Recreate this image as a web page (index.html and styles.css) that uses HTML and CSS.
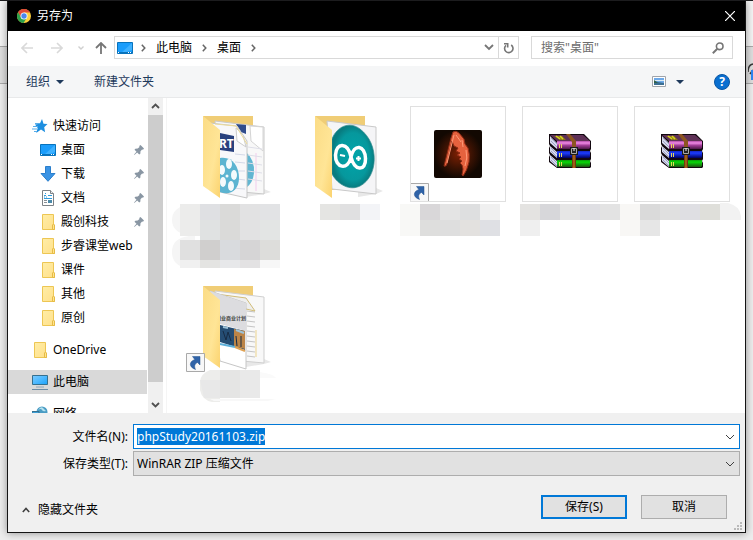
FILE: index.html
```html
<!DOCTYPE html>
<html lang="zh-CN">
<head>
<meta charset="utf-8">
<title>另存为</title>
<meta name="viewport" content="width=device-width, initial-scale=1">
<link rel="stylesheet" href="styles.css">
</head>
<body>
<svg width="0" height="0" class="defs" aria-hidden="true">
  <defs>
    <linearGradient id="flap" x1="0" y1="0" x2="1" y2="1"><stop offset="0" stop-color="#fbdc86"/><stop offset="0.6" stop-color="#ffe596"/><stop offset="1" stop-color="#fbd36f"/></linearGradient>
    <linearGradient id="leaf" x1="0" y1="0" x2="1" y2="1"><stop offset="0" stop-color="#ffeda6"/><stop offset="1" stop-color="#ffe08a"/></linearGradient>
    <linearGradient id="screen" x1="0" y1="0" x2="1" y2="1"><stop offset="0" stop-color="#7ccbff"/><stop offset="0.5" stop-color="#4db9ff"/><stop offset="1" stop-color="#1ba1f8"/></linearGradient>
    <radialGradient id="teal"><stop offset="0" stop-color="#00a5aa"/><stop offset="0.75" stop-color="#06989d"/><stop offset="1" stop-color="#087c80"/></radialGradient>
    <radialGradient id="ember"><stop offset="0" stop-color="#7c2003"/><stop offset="0.6" stop-color="#3a1203"/><stop offset="1" stop-color="#120802"/></radialGradient>
    <linearGradient id="plum" x1="0" y1="0" x2="0" y2="1"><stop offset="0" stop-color="#b04aa6"/><stop offset="0.25" stop-color="#f08ae6"/><stop offset="0.55" stop-color="#a03c96"/><stop offset="1" stop-color="#4d1848"/></linearGradient>
    <linearGradient id="navy" x1="0" y1="0" x2="0" y2="1"><stop offset="0" stop-color="#1526c0"/><stop offset="0.3" stop-color="#1c3cff"/><stop offset="1" stop-color="#000060"/></linearGradient>
    <linearGradient id="green" x1="0" y1="0" x2="0" y2="1"><stop offset="0" stop-color="#0a9a0a"/><stop offset="0.3" stop-color="#08d808"/><stop offset="1" stop-color="#1d5412"/></linearGradient>
    <linearGradient id="strap" x1="0" y1="0" x2="1" y2="0"><stop offset="0" stop-color="#5c2e08"/><stop offset="0.5" stop-color="#b86d1c"/><stop offset="1" stop-color="#53290a"/></linearGradient>
    <symbol id="folder" viewBox="0 0 16 16"><path d="M2.5.5h11v11l1 1v3h-12z" fill="url(#leaf)" stroke="#edc653"/><path d="M12.5 15.500v-4.500l1-1 1 1v4.500z" fill="#ffe48f" stroke="#e6bb45"/></symbol>
    <symbol id="desktop" viewBox="0 0 16 16"><path d="M.5 2.500h15v11H.5z" fill="#1b9dfb" stroke="#0873bc"/><path d="M15 3v7L8 13H4z" fill="#3eb1ff"/><path d="M1 12.500h14" stroke="#0873bc"/><path d="M1 12.500h1m9 0h1m1 0h1" stroke="#fff"/></symbol>
    <symbol id="pin" viewBox="0 0 10 10"><path d="M6.500 0 10 3.500l-1 1.300-.9-.2L6.500 6.300l-.2 2.400-1.100.8L3.200 7.500.6 9.700 0 10l.3-.7L2.500 6.800.5 4.800l.8-1.100 2.400-.2L5.500 2 5.200 1z" fill="#8996a3"/></symbol>
    <symbol id="down" viewBox="0 0 10 6"><path d="m1 1 4 4 4-4" fill="none" stroke="currentColor"/></symbol>
    <symbol id="link" viewBox="0 0 19 19"><path d="M.5.5h18v18H.5z" fill="#f8f8f8" stroke="#a9a9a9"/><path d="M6.500 3.500H14V12l-2.500-2.500C8.500 11 8 13 9.500 16.500 2.500 14 3 8.500 8.800 6.500z" fill="#2f63a8" stroke="#22538f" stroke-width=".5"/></symbol>
    <symbol id="books" viewBox="0 0 42 34">
      <path d="M0 0h35l7 7v8l-1 2 1 2v6l-1 2 1 2v4l-1 1H8L0 28v-5l1-2-1-2v-5l1-2-1-2z" fill="#12080f"/>
      <path d="M1 1h33l7 6H8z" fill="#5f3156"/><path d="M5 2h8l4 4h-6z" fill="#8f7919"/><path d="m7 2 4 3m0-3 3 3" stroke="#d8d323" stroke-width="1.500"/>
      <path d="m1 2 7 7v6L1 9zm0 10 7 6v6l-7-6zm0 9 7 6v6l-7-6z" fill="#d8d9ed"/><path d="m2 4 6 6M2 7l6 6M2 14l6 6m-6-3 6 6M2 23l6 6m-6-3 6 6" stroke="#858bb4" stroke-width=".7"/>
      <path d="M8 7h33v7l-1 1H8z" fill="url(#plum)"/><path d="M8 17h33v6l-1 1H8z" fill="url(#navy)"/><path d="M8 26h33v6l-1 1H8z" fill="url(#green)"/>
      <path d="M10.500 10v4m2-4v4m-2 5v4m2-4v4m-2 5v4m2-4v4" stroke="#e8d85a"/>
      <path d="M17 0h4l6 7v7h-4V8z" fill="#8c5520"/><path d="M23 21h4v13h-4z" fill="url(#strap)"/>
      <path d="M21 13h8v8h-8z" fill="#191919"/><path d="M22.500 14.500h5v5h-5z" fill="#222" stroke="#a9a9a9"/><path d="M25 14v3" stroke="#f4f4f4"/>
    </symbol>
  </defs>
</svg>

<main class="dialog">
  <header class="titlebar">
    <svg class="logo" width="14" height="14" viewBox="0 0 16 16" aria-hidden="true"><circle cx="8" cy="8" r="8" fill="#fbce3c"/><path d="M8 8V4h7A8 8 0 0 0 1.200 3.800L4.500 10z" fill="#e04a38"/><path d="M1.200 3.800A8 8 0 0 0 7.500 16L11.300 10 8 8 4.700 9.800z" fill="#2ca04c"/><circle cx="8" cy="8" r="4" fill="#fff"/><circle cx="8" cy="8" r="3.100" fill="#4a86ee"/></svg>
    <h1>另存为</h1>
    <button class="plain close" aria-label="关闭"><svg width="10" height="10" viewBox="0 0 10 10"><path d="m0 0 10 10M10 0 0 10" stroke="#fff" stroke-width="1.200"/></svg></button>
  </header>

  <nav class="address">
    <button class="plain nav back" aria-label="后退"><svg width="12" height="12" viewBox="0 0 12 12"><path d="M12 6H1m5-5L1 6l5 5" fill="none" stroke="#d9d9d9" stroke-width="1.600"/></svg></button>
    <button class="plain nav fwd" aria-label="前进"><svg width="12" height="12" viewBox="0 0 12 12"><path d="M0 6h11M6 1l5 5-5 5" fill="none" stroke="#d9d9d9" stroke-width="1.600"/></svg></button>
    <button class="plain nav recent" aria-label="最近位置"><svg width="6" height="4" viewBox="0 0 6 4"><path d="m.5.5 2.500 2.500L5.500.5" fill="none" stroke="#cfcfcf" stroke-width="1.400"/></svg></button>
    <button class="plain nav up" aria-label="上移"><svg width="12" height="12" viewBox="0 0 12 12"><path d="M6 12V1M1 6l5-5 5 5" fill="none" stroke="#767676" stroke-width="1.800"/></svg></button>
    <div class="path">
      <svg class="place" width="16" height="16"><use href="#desktop"/></svg>
      <svg class="sep" width="5" height="8" viewBox="0 0 5 8"><path d="m.8.8 3 3.200-3 3.200" fill="none" stroke="#666" stroke-width="1.500"/></svg>
      <a href="#pc">此电脑</a>
      <svg class="sep" width="5" height="8" viewBox="0 0 5 8"><path d="m.8.8 3 3.200-3 3.200" fill="none" stroke="#666" stroke-width="1.500"/></svg>
      <a href="#desk">桌面</a>
      <svg class="sep" width="5" height="8" viewBox="0 0 5 8"><path d="m.8.8 3 3.200-3 3.200" fill="none" stroke="#666" stroke-width="1.500"/></svg>
      <button class="plain history" aria-label="历史"><svg width="10" height="7" viewBox="0 0 10 7"><path d="m1 1 4 4 4-4" fill="none" stroke="#767676" stroke-width="1.800"/></svg></button>
      <button class="plain refresh" aria-label="刷新"><svg width="12" height="12" viewBox="0 0 12 12"><path d="M8.200 3A4.200 4.200 0 1 1 3 3.300" fill="none" stroke="#767676" stroke-width="1.600"/><path d="M1 1.800h3.700v3.700" fill="none" stroke="#767676" stroke-width="1.600"/></svg></button>
    </div>
    <div class="search">
      <input type="text" aria-label="搜索" placeholder='搜索"桌面"'>
      <svg width="12" height="12" viewBox="0 0 12 12"><circle cx="7.700" cy="4.300" r="3.300" fill="none" stroke="#767676" stroke-width="1.600"/><path d="M5.300 6.800.8 11.200" stroke="#767676" stroke-width="2"/></svg>
    </div>
  </nav>

  <div class="toolbar">
    <button class="plain">组织<svg width="8" height="4" viewBox="0 0 8 4"><path d="M0 0h8L4 4z" fill="#1e395b"/></svg></button>
    <button class="plain">新建文件夹</button>
    <button class="plain view" aria-label="更改视图"><svg width="14" height="11" viewBox="0 0 14 11"><path d="M.5.5h13v10H.5z" fill="#fff" stroke="#a0a4aa"/><path d="M2 2h10v7H2z" fill="#6ea9e8"/><path d="M2 4h10v1H2z" fill="#dcecf5"/><path d="m2 5 4 1 6 1v2H2z" fill="#3c6f92"/><path d="m2 4 4 3H2z" fill="#326148"/></svg></button>
    <button class="plain more" aria-label="更多选项"><svg width="8" height="4" viewBox="0 0 8 4"><path d="M0 0h8L4 4z" fill="#1e395b"/></svg></button>
    <button class="help" aria-label="帮助">?</button>
  </div>

  <div class="content">
    <aside class="tree">
      <ul>
        <li class="root"><svg width="16" height="16" viewBox="0 0 16 16"><path d="m10 1 1.500 4.700 4 .3-3.300 3.200.9 5L9 11.500 4.200 15l1.500-5L3 6.500l4.800-.7z" fill="#1d8fe0"/><path d="M3 5.500h5M1 8.500h5M0 11h5M2 13.500h3" stroke="#56adea"/></svg>快速访问</li>
        <li><svg width="16" height="16"><use href="#desktop"/></svg>桌面<svg class="pin" width="10" height="10"><use href="#pin"/></svg></li>
        <li><svg width="16" height="16" viewBox="0 0 16 16"><path d="M5.500.5h5v7h4.500l-7 7.800-7-7.800h4.500z" fill="#3a93e4" stroke="#2b7fcc"/></svg>下载<svg class="pin" width="10" height="10"><use href="#pin"/></svg></li>
        <li><svg width="16" height="16" viewBox="0 0 16 16"><path d="M2.500.5h8l3 3v12h-11z" fill="#fff" stroke="#7d8287"/><path d="M10.500.5v3h3" fill="#eee" stroke="#7d8287"/><path d="M8 5.500h4M4 8.500h8M4 5.500h2M5 3.500h1M4 7h1m1 0h1" stroke="#2f9bdc"/><path d="M4 10.500h3M4 12.500h3" stroke="#8a9096"/><path d="M8 10h4v3H8z" fill="#4b8aaa"/></svg>文档<svg class="pin" width="10" height="10"><use href="#pin"/></svg></li>
        <li><svg width="16" height="16"><use href="#folder"/></svg>殿创科技<svg class="pin" width="10" height="10"><use href="#pin"/></svg></li>
        <li><svg width="16" height="16"><use href="#folder"/></svg>步睿课堂web</li>
        <li><svg width="16" height="16"><use href="#folder"/></svg>课件</li>
        <li><svg width="16" height="16"><use href="#folder"/></svg>其他</li>
        <li><svg width="16" height="16"><use href="#folder"/></svg>原创</li>
      </ul>
      <ul><li class="root"><svg width="16" height="16"><use href="#folder"/></svg>OneDrive</li></ul>
      <ul><li class="root selected"><svg width="16" height="16" viewBox="0 0 16 16"><path d="M.5 1.500h15v9H.5z" fill="url(#screen)" stroke="#35708f"/><path d="M4 13h8" stroke="#8fa7b8"/><path d="M0 15.500h16" stroke="#6f8da5"/></svg>此电脑</li></ul>
      <ul><li class="root"><svg width="16" height="16" viewBox="0 0 16 16"><circle cx="10" cy="6" r="5.500" fill="#4a9cc4"/><path d="M6 4q3-4 5-2t3 3q-3 1-4-1t-4 0" fill="#b5e1ee"/><path d="M0 5.500h7V11H0z" fill="#3da0d8" stroke="#35708f"/></svg>网络</li></ul>
    </aside>
    <div class="scroll" aria-hidden="true">
      <svg width="15" height="17" viewBox="0 0 15 17"><path d="m4 10 3.500-3.500L11 10" fill="none" stroke="#505050" stroke-width="1.800"/></svg>
      <span class="thumb"></span>
      <svg width="15" height="17" viewBox="0 0 15 17"><path d="m4 7 3.500 3.500L11 7" fill="none" stroke="#505050" stroke-width="1.800"/></svg>
    </div>

    <div class="files">
      <div class="file">
        <svg class="art" width="96" height="96" viewBox="0 0 96 96">
          <path d="m60 91 18-3 7-2-7-3-18 2z" fill="#e8e8e8"/>
          <path d="M17 10h50v74H34z" fill="#f0cd76"/>
          <path d="m29 15 49 6v67l-44-4z" fill="#f8f8f8" stroke="#c9c9c9"/>
          <path d="m50 18 10 1v9l-5-2z" fill="#304c8c"/><path d="m64 20 1 15 12 10V21z" fill="#fff" stroke="#d4d4d4"/>
          <path d="M60 46q9 8 8 21-1 10-8 15" fill="#62b6d2"/><path d="M70 47v38" stroke="#f2ccec"/>
          <path d="m62 41 14 2m-14 6 14 2m-14 6 14 2m-14 6 14 2m-14 6 14 2" stroke="#dedee8"/>
          <path d="m24 17 27 3 10 15v57l-27-6z" fill="#f8f8fa" stroke="#c6c6c6"/>
          <path d="m34 27 14 3v16l-14-2z" fill="#29417e"/>
          <text x="33" y="42" class="reel-text">RT</text>
          <path d="m50 22 1 13 9 6-3-12z" fill="#fff" stroke="#ccc"/><path d="m29 18 21 2 11 18" fill="none" stroke="#eedc98"/>
          <path d="m49 48 10 1m-10 7 10 1m-8 8h8m-8 8 8 1m-14 8 14 1" stroke="#d4d9e8"/>
          <path d="M34 52c12-2 19 8 19 20S44 90 34 86z" fill="#5cb4d1"/><g fill="#f4fafc"><ellipse cx="43" cy="58" rx="3" ry="5"/><ellipse cx="36" cy="64" rx="3" ry="5"/><ellipse cx="48" cy="69" rx="3" ry="5"/><ellipse cx="37" cy="76" rx="3" ry="5"/><ellipse cx="45" cy="80" rx="3" ry="5"/><circle cx="41" cy="70" r="1.500"/></g>
          <path d="m17 10 17 14v68L17 80z" fill="url(#flap)"/>
        </svg>
        <svg class="mosaic" width="96" height="64" viewBox="0 0 96 64">
          <path d="M9 0H2q-16 4-16 16t17 16q-17 2-17 16T2 64h7z" fill="#f5f5f5"/>
          <path d="M-6 0h20v32H-6z" fill="#ececeb"/><path d="M14 0h20v32H14z" fill="#dfe0e3"/><path d="M34 0h20v36H34z" fill="#dadad9"/><path d="M54 0h20v36H54z" fill="#e2e2e3"/><path d="M74 0h20v36H74z" fill="#e2e3e5"/>
          <path d="M14 16h20v20H14z" fill="#e0e2e2"/><path d="M74 16h20v20H74z" fill="#e3e5e4"/>
          <path d="M-6 36h20v20H-6z" fill="#e0e0e0"/><path d="M14 36h20v20H14z" fill="#d0cfce"/><path d="M34 36h20v20H34z" fill="#d9dbde"/><path d="M54 36h20v20H54z" fill="#d6d5d6"/><path d="M74 36h20v20H74z" fill="#dddddb"/>
          <path d="M-6 56h20v8H-6z" fill="#f0f0f0"/><path d="M14 56h20v8H14z" fill="#e4e4e2"/><path d="M34 56h20v8H34z" fill="#e7e8ea"/><path d="M54 56h20v8H54z" fill="#e3e2e3"/><path d="M74 56h20v8H74z" fill="#f7f7f7"/>
        </svg>
      </div>
      <div class="file">
        <svg class="art" width="96" height="96" viewBox="0 0 96 96">
          <path d="m60 91 18-3 7-3-7-3-18 2z" fill="#e8e8e8"/>
          <path d="M17 10h50v74H34z" fill="#f0cd76"/>
          <path d="m29 15 49 6v67l-44-5z" fill="#f5f5f7" stroke="#c9c9c9"/>
          <path d="M34 33c5-13 18-18 28-10 20 15 18 48 0 57-10 5-22-1-28-12z" fill="url(#teal)" stroke="#2e8a8c" stroke-width=".7"/>
          <path d="M53 51C50 36 38 36 37.500 49s12.500 16 15.500 2 14-12 14.500 1.500S56 65 53 51z" fill="none" stroke="#fff" stroke-width="3.500"/>
          <path d="m42 49 5 1M58 52.500h5M60.500 50v5" stroke="#fff" stroke-width="2"/>
          <path d="m17 10 17 14v68L17 80z" fill="url(#flap)"/>
        </svg>
        <svg class="mosaic" width="96" height="16" viewBox="0 0 96 16"><path d="M22 0h20v16H22z" fill="#e5e5e3"/><path d="M42 0h20v16H42z" fill="#e0e0e1"/><path d="M62 0h20v16H62z" fill="#f3f4f7"/></svg>
      </div>
      <div class="file framed">
        <svg class="art" width="96" height="96" viewBox="0 0 96 96">
          <rect x="24" y="24" width="48" height="48" rx="2" fill="url(#ember)"/>
          <path d="m34 60 3-12 4-16 2-6q3-2 6 1l5 6 1 5 3 4q2 6 1 14-2 9-6 14l-1-1 1-6-1-4-2-2 2-2-3-2 2-2-4-2 3-2-4-2 2-3-4-2-2-5-5 23q-1 3-3 2z" fill="#e5623e" stroke="#8c2a14"/>
          <path d="m37 57 7-28m2 0 5 7m1-2 1 7m3 3q2 8-1 16" fill="none" stroke="#ff9a78"/>
          <svg y="77" width="19" height="19"><use href="#link"/></svg>
        </svg>
        <svg class="mosaic" width="96" height="32" viewBox="0 0 96 32"><path d="M-10 0h20v32h-20z" fill="#f8f8f6"/><path d="M10 0h20v16H10z" fill="#d9d7d9"/><path d="M30 0h20v16H30z" fill="#e4e4e4"/><path d="M50 0h20v16H50z" fill="#dedfe0"/><path d="M70 0h20v16H70z" fill="#f0f0f0"/><path d="M10 16h20v16H10z" fill="#dededd"/><path d="M30 16h20v16H30z" fill="#dedede"/><path d="M50 16h20v16H50z" fill="#e3e1df"/><path d="M70 16h20v16H70z" fill="#dfe0e4"/></svg>
      </div>
      <div class="file framed">
        <svg class="art" width="96" height="96" viewBox="0 0 96 96"><use href="#books" x="27" y="28" width="42" height="34"/></svg>
        <svg class="mosaic" width="96" height="32" viewBox="0 0 96 32"><path d="M-2 0h20v16H-2z" fill="#e4e3e1"/><path d="M18 0h20v16H18z" fill="#d7d7da"/><path d="M38 0h20v16H38z" fill="#e6e6e6"/><path d="M58 0h20v16H58z" fill="#dfdfe3"/><path d="M78 0h20v16H78z" fill="#e3e3e3"/><path d="M-2 16h20v16H-2z" fill="#efefef"/></svg>
      </div>
      <div class="file framed">
        <svg class="art" width="96" height="96" viewBox="0 0 96 96"><use href="#books" x="27" y="28" width="42" height="34"/></svg>
        <svg class="mosaic" width="96" height="32" viewBox="0 0 96 32"><path d="M-14 0H6v32h-20z" fill="#f8f7f5"/><path d="M6 0h20v16H6z" fill="#dadada"/><path d="M26 0h20v16H26z" fill="#e0e0e0"/><path d="M46 0h20v16H46z" fill="#dfdfe3"/><path d="M66 0h20v16H66z" fill="#dfdfda"/><path d="M86-1h8q12 3 13 13v4H86z" fill="#f2f2f2"/><path d="M6 16h20v16H6z" fill="#e6e6e6"/></svg>
      </div>
      <div class="file">
        <svg class="art" width="96" height="96" viewBox="0 0 96 96">
          <path d="m60 91 18-3 7-2-7-3-18 2z" fill="#e8e8e8"/>
          <path d="M17 10h50v74H34z" fill="#f0cd76"/>
          <path d="m29 15 49 6v66l-44-4z" fill="#f8f8f8" stroke="#cfcfcf"/>
          <path d="m61 35 8 1m-8 4 8 1m-8 4 8 1m-8 4 8 1m-8 4 8 1m-8 4 8 1m-8 4 8 1m-8 4 8 1m-8 4 8 1m-8 4 8 1" stroke="#c4c4c4"/><path d="M70 54v27" stroke="#ecd38d"/>
          <path d="m30 18 30 4 9 13-9-2" fill="#eee" stroke="#d2bd78"/>
          <path d="m24 15 36 12v66l-26-8z" fill="#fff" stroke="#c6c6c6"/>
          <path d="m24 15 36 12v28l-26-7z" fill="#dcdcdf"/>
          <text x="30" y="44" class="cover-text">创业商业计划</text>
          <path d="m34 49 25 6v19l-25-8z" fill="#254d73"/><path d="m48 53 11 2v18l-11-3z" fill="#bb8447"/>
          <path d="m37 55 3 9 2-8 3 9m5-5 1 10m4-10v11" stroke="#172c45" fill="none"/><path d="m37 51 5 1m8 2 8 3" stroke="#9cc2d8" stroke-width="2"/>
          <path d="m34 68 15 3" stroke="#5cafda" stroke-width="2"/><path d="m49 71 10 4" stroke="#e0a253" stroke-width="2"/>
          <path d="m17 10 17 14v68L17 80z" fill="url(#flap)"/>
          <svg y="77" width="19" height="19"><use href="#link"/></svg>
        </svg>
        <svg class="mosaic" width="96" height="32" viewBox="0 0 96 32"><path d="M74-2q14 2 16 6H74z" fill="#fafafa"/><path d="M24-4q-10 4-10 12v8q2 10 12 12h8V-4z" fill="#ededeb"/><path d="M34-4h20v28H34z" fill="#e5e5e4"/><path d="M54-4h20v28H54z" fill="#e9e9e9"/><path d="M14 6h20v18H18z" fill="#e8e8e8"/><path d="M24 25h66l-8 2H28z" fill="#f8f8f8"/></svg>
      </div>
    </div>
  </div>

  <form class="footer">
    <label for="name">文件名(N):</label>
    <div class="combo">
      <input id="name" type="text" value="phpStudy20161103.zip">
      <svg width="10" height="6"><use href="#down"/></svg>
    </div>
    <label for="type">保存类型(T):</label>
    <div class="combo type">
      <select id="type"><option>WinRAR ZIP 压缩文件</option></select>
      <svg width="10" height="6"><use href="#down"/></svg>
    </div>
    <div class="actions">
      <button type="button" class="plain hide"><svg width="8" height="6" viewBox="0 0 8 6"><path d="m.8 5 3.200-3.500L7.200 5" fill="none" stroke="#404040" stroke-width="1.600"/></svg>隐藏文件夹</button>
      <button type="button" class="btn primary">保存(S)</button>
      <button type="button" class="btn">取消</button>
    </div>
    <svg class="grip" width="8" height="8" viewBox="0 0 8 8" aria-hidden="true"><path d="M6 0h2v2H6zM3 3h2v2H3zm3 0h2v2H6zM0 6h2v2H0zm3 0h2v2H3zm3 0h2v2H6z" fill="#b9b9b9"/></svg>
  </form>
</main>
<svg class="behind" width="5" height="20" viewBox="0 0 5 20" aria-hidden="true"><path d="M0 9q0-7 5-8M2 11l3-4" fill="none" stroke="#333" stroke-width="1.500"/><path d="M3 7h2v10H3z" fill="#2d83ee"/></svg>
</body>
</html>
```

FILE: styles.css
```css
* { box-sizing: border-box; }

body {
  margin: 0;
  height: 100vh;
  overflow: hidden;
  padding: 0 7px;
  padding-bottom: 7px;
  border-top: 1px solid #1c1c1e;
  background: linear-gradient(#f4f4f4 0 46px, #a9a9a9 46px 47px, #dedede 47px 83px, #a9a9a9 83px 84px, #ededed 84px);
  font-family: "Noto Sans", "Noto Sans CJK SC", sans-serif;
  font-size: 12px;
  line-height: 16px;
  color: #000;
}

.defs { position: absolute; }
svg { display: block; flex: none; }
ul { margin: 0; padding: 0; list-style: none; }
button, input, select { font: inherit; color: inherit; }

.plain {
  display: flex;
  align-items: center;
  padding: 0;
  border: 0;
  background: none;
}

.dialog {
  display: flex;
  flex-direction: column;
  height: 100%;
  border: 1px solid #141414;
  border-top: 0;
  background: #fff;
  box-shadow: 0 0 8px rgba(0, 0, 0, 0.4);
}

.titlebar {
  display: flex;
  align-items: center;
  gap: 6px;
  height: 30px;
  padding: 0 10px 0 9px;
  background: #000;
  color: #fff;
}
.titlebar h1 { margin: 0; flex: 1; font-size: 12px; font-weight: 400; }

.address {
  display: flex;
  align-items: center;
  height: 35px;
  padding: 0 12px 2px 13px;
}
.back { margin-right: 18px; }
.fwd { margin-right: 15px; }
.recent { margin-right: 11px; }
.up { margin-right: 7px; }
.path, .search {
  display: flex;
  align-items: center;
  height: 23px;
  border: 1px solid #d9d9d9;
  background: #fff;
}
.path { flex: 1; padding-left: 2px; margin-right: 12px; }
.path a { color: inherit; text-decoration: none; margin: 0 10px; }
.place { margin-right: 8px; }
.history { margin-left: auto; padding: 0 4px; height: 100%; }
.refresh { width: 20px; height: 100%; justify-content: center; border-left: 1px solid #d9d9d9; }
.search { width: 202px; padding: 0 8px 0 9px; }
.search input { flex: 1; min-width: 0; border: 0; padding: 0; background: none; outline: 0; }
.search input::placeholder { color: #6d6d6d; opacity: 1; }

.toolbar {
  display: flex;
  align-items: center;
  height: 32px;
  padding: 0 15px 0 18px;
  border-bottom: 1px solid #e8e9ea;
  background: #f5f6f7;
  color: #1e395b;
}
.toolbar .plain { gap: 6px; margin-right: 30px; }
.toolbar .view { margin: 0 10px 0 auto; }
.help {
  width: 16px;
  height: 16px;
  padding: 0;
  border: 1px solid #0a57a4;
  border-radius: 50%;
  background: #0a6fd0;
  color: #fff;
  font-weight: 700;
  line-height: 14px;
}

.content {
  display: flex;
  flex: 1;
  min-height: 0;
}
.tree { width: 140px; padding-top: 16px; overflow: hidden; }
.tree ul { margin-bottom: 8px; }
.tree li {
  display: flex;
  align-items: center;
  gap: 5px;
  height: 24px;
  padding: 0 3px 0 32px;
  margin-right: 1px;
  white-space: nowrap;
}
.tree .root { padding-left: 24px; }
.tree .selected { background: #d9d9d9; }
.pin { margin-left: auto; }

.scroll {
  display: flex;
  flex-direction: column;
  width: 15px;
  background: #f0f0f0;
}
.thumb { height: 267px; background: #cdcdcd; }
.scroll svg:last-child { margin-top: auto; }

.files {
  display: grid;
  grid-template-columns: repeat(auto-fill, 96px);
  grid-auto-rows: 170px;
  gap: 0 16px;
  align-content: start;
  flex: 1;
  margin-left: 3px;
  padding: 8px 0 0 19px;
  border-left: 1px solid #f5f5f5;
  overflow: hidden;
}
.file svg { overflow: visible; }
.framed .art { outline: 1px solid #e0e0e0; outline-offset: -1px; }
.mosaic { margin-top: 2px; }
.reel-text { font-size: 12px; font-weight: 700; fill: #fff; }
.cover-text { font-size: 5px; font-weight: 700; fill: #444; }

.footer {
  position: relative;
  display: grid;
  grid-template-columns: 120px 1fr;
  gap: 2px 5px;
  align-items: center;
  padding: 11px 5px 13px 0;
  background: #f0f0f0;
}
.footer label { text-align: right; }
.combo {
  position: relative;
  display: flex;
  align-items: center;
  height: 25px;
  padding: 0 4px 0 3px;
  border: 1px solid #0078d7;
  background: #fff;
  color: #000;
}
.combo svg { margin-left: auto; color: #404040; pointer-events: none; }
.combo input {
  field-sizing: content;
  height: 17px;
  padding: 0;
  border: 0;
  outline: 0;
  background: #0078d7;
  color: #fff;
}
.combo.type { border-color: #adadad; background: #e1e1e1; }
.combo select { flex: 1; appearance: none; padding: 0; border: 0; background: none; outline: 0; }

.actions {
  display: flex;
  align-items: center;
  grid-column: 1 / -1;
  gap: 14px;
  margin-top: 17px;
  padding: 0 13px 0 14px;
}
.hide { gap: 8px; margin-right: auto; padding-top: 6px; }
.btn {
  width: 86px;
  height: 24px;
  padding: 0;
  border: 1px solid #adadad;
  background: #e1e1e1;
}
.primary { border: 2px solid #0078d7; }
.grip { position: absolute; right: 3px; bottom: 2px; }
.behind { position: absolute; top: 63px; right: 0; }
```
